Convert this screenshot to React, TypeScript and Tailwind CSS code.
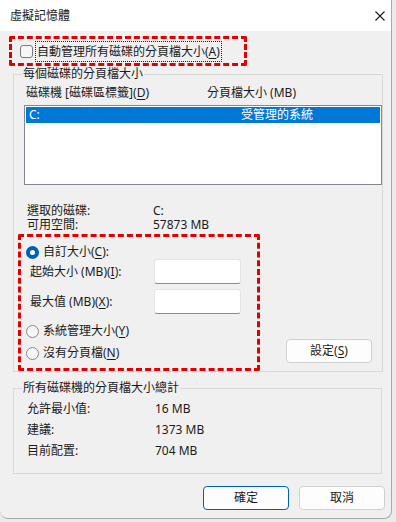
import type { ReactNode } from 'react'

function Key({ children }: { children: ReactNode }) {
  return <u className="underline-offset-[2px]">{children}</u>
}

function Radio({ checked = false }: { checked?: boolean }) {
  return checked ? (
    <span className="grid size-[13px] shrink-0 place-items-center rounded-full bg-[#005fb8]">
      <span className="size-[5px] rounded-full bg-white" />
    </span>
  ) : (
    <span className="size-[13px] shrink-0 rounded-full border border-[#8a8a8a] bg-[#f6f6f6]" />
  )
}

function Field() {
  return (
    <span className="block h-[25px] w-[87px] rounded-[3px] border border-[#e3e3e3] border-b-[#8c8c8c] bg-white" />
  )
}

function Button({ children, primary = false }: { children: ReactNode; primary?: boolean }) {
  return (
    <button
      type="button"
      className={`grid h-[24px] w-[86px] place-items-center rounded-[4px] border bg-[#fdfdfd] text-[12px] leading-[14px] text-[#1b1b1b] ${
        primary ? 'border-[#005fb8]' : 'border-[#d0d0d0]'
      }`}
    >
      {children}
    </button>
  )
}

export default function App() {
  return (
    <div className="h-[522px] w-[396px] bg-[#ebebeb] font-['Noto_Sans','Noto_Sans_CJK_TC',sans-serif] text-[12px] leading-[14px] text-[#1b1b1b]">
      <div className="flex h-[519px] w-[392px] flex-col overflow-hidden rounded-b-[8px] border-r border-b border-[#a8a8a8] bg-[#f0f0f0]">
        <div className="flex h-[31px] shrink-0 items-center justify-between bg-white pl-[10px] pr-[6px]">
          <span>虛擬記憶體</span>
          <svg viewBox="0 0 10 10" className="size-[10px]" fill="none" aria-hidden="true">
            <path d="M0.5 0.5l9 9M9.5 0.5l-9 9" stroke="#1b1b1b" strokeWidth="1.1" />
          </svg>
        </div>

        <div className="ml-[9px] mt-[5px] flex h-[30px] w-[238px] items-center rounded-[2px] border-[3px] border-dashed border-[#e10000] pl-[8px]">
          <span className="size-[13px] shrink-0 rounded-[3px] border border-[#7a7a7a] bg-[#f6f6f6]" />
          <span className="ml-[3px] inline-block h-[19px] px-[1px] leading-[19px] outline-1 outline-dotted outline-[#222]">
            自動管理所有磁碟的分頁檔大小(<Key>A</Key>)
          </span>
        </div>

        <fieldset className="ml-[13px] mt-[1px] w-[369px] border border-[#d9d9d9]">
          <legend className="ml-[8px] px-[1px] leading-[14px]">每個磁碟的分頁檔大小</legend>
          <div className="mt-[5px] flex h-[14px] pl-[12px]">
            <span className="w-[181px]">磁碟機 [磁碟區標籤](<Key>D</Key>)</span>
            <span>分頁檔大小 (MB)</span>
          </div>
          <div className="ml-[10px] mt-[5px] h-[80px] w-[358px] border border-[#828790] bg-white p-[1px]">
            <div className="flex h-[16px] items-center bg-[#0078d7] pl-[3px] text-white">
              <span className="w-[212px]">C:</span>
              <span>受管理的系統</span>
            </div>
          </div>
          <div className="mt-[19px] pl-[13px]">
            <div className="flex h-[14px]">
              <span className="w-[126px]">選取的磁碟:</span>
              <span>C:</span>
            </div>
            <div className="flex h-[14px]">
              <span className="w-[126px]">可用空間:</span>
              <span>57873 MB</span>
            </div>
          </div>
          <div className="mt-[2px] flex">
            <div className="ml-[4px] flex h-[137px] w-[242px] flex-col rounded-[2px] border-[3px] border-dashed border-[#e10000]">
              <label className="mt-[8px] flex h-[14px] items-center gap-[4px] pl-[5px]">
                <Radio checked />
                <span>
                  自訂大小(<Key>C</Key>):
                </span>
              </label>
              <div className="flex items-center pl-[9px]">
                <span className="w-[124px]">
                  起始大小 (MB)(<Key>I</Key>):
                </span>
                <Field />
              </div>
              <div className="mt-[5px] flex items-center pl-[9px]">
                <span className="w-[124px]">
                  最大值 (MB)(<Key>X</Key>):
                </span>
                <Field />
              </div>
              <label className="mt-[10px] flex h-[14px] items-center gap-[4px] pl-[5px]">
                <Radio />
                <span>
                  系統管理大小(<Key>Y</Key>)
                </span>
              </label>
              <label className="mt-[8px] flex h-[14px] items-center gap-[4px] pl-[5px]">
                <Radio />
                <span>
                  沒有分頁檔(<Key>N</Key>)
                </span>
              </label>
            </div>
            <div className="mb-[8px] ml-[26px] self-end">
              <Button>
                <span>
                  設定(<Key>S</Key>)
                </span>
              </Button>
            </div>
          </div>
        </fieldset>

        <fieldset className="ml-[13px] mt-[9px] w-[369px] border border-[#d9d9d9] pb-[12px]">
          <legend className="ml-[8px] px-[1px] leading-[14px]">所有磁碟機的分頁檔大小總計</legend>
          <div className="mt-[3px] pl-[13px] leading-[21px]">
            <div className="flex">
              <span className="w-[128px]">允許最小值:</span>
              <span>16 MB</span>
            </div>
            <div className="flex">
              <span className="w-[128px]">建議:</span>
              <span>1373 MB</span>
            </div>
            <div className="flex">
              <span className="w-[128px]">目前配置:</span>
              <span>704 MB</span>
            </div>
          </div>
        </fieldset>

        <div className="mt-[12px] flex justify-end gap-[10px] pr-[6px]">
          <Button primary>確定</Button>
          <Button>取消</Button>
        </div>
      </div>
    </div>
  )
}
